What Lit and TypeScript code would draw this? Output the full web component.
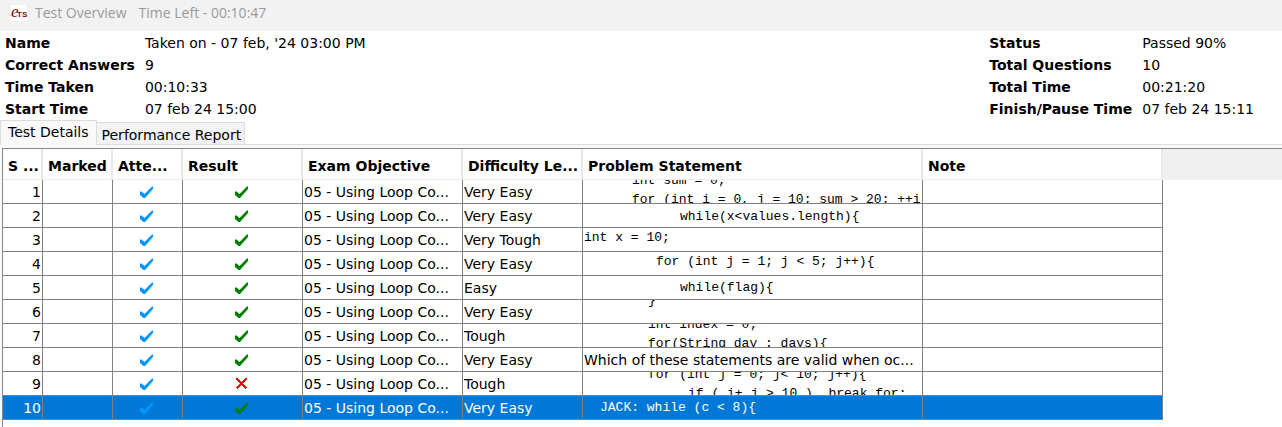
import { LitElement, html, css, svg, nothing } from "lit";
import { customElement, state } from "lit/decorators.js";
import { classMap } from "lit/directives/class-map.js";
import { styleMap } from "lit/directives/style-map.js";

interface CodeLine {
  indent: number;
  text: string;
}

interface Row {
  passed: boolean;
  level: string;
  shift?: number;
  code?: CodeLine[];
  prose?: string;
}

const CHAR = 8;

const ROWS: Row[] = [
  { passed: true, level: "Very Easy", shift: -9, code: [{ indent: 6, text: "int sum = 0;" }, { indent: 6, text: "for (int i = 0, j = 10; sum > 20; ++i" }] },
  { passed: true, level: "Very Easy", shift: 3, code: [{ indent: 12, text: "while(x<values.length){" }] },
  { passed: true, level: "Very Tough", shift: 0, code: [{ indent: 0, text: "int x = 10;" }] },
  { passed: true, level: "Very Easy", shift: 0, code: [{ indent: 9, text: "for (int j = 1; j < 5; j++){" }] },
  { passed: true, level: "Easy", shift: 2, code: [{ indent: 12, text: "while(flag){" }] },
  { passed: true, level: "Very Easy", shift: -9, code: [{ indent: 8, text: "}" }] },
  { passed: true, level: "Tough", shift: -9, code: [{ indent: 8, text: "int index = 0;" }, { indent: 8, text: "for(String day : days){" }] },
  { passed: true, level: "Very Easy", prose: "Which of these statements are valid when oc..." },
  { passed: false, level: "Tough", shift: -7, code: [{ indent: 8, text: "for (int j = 0; j< 10; j++){" }, { indent: 13, text: "if ( i+ j > 10 )  break for;" }] },
  { passed: true, level: "Very Easy", shift: 2, code: [{ indent: 2, text: "JACK: while (c < 8){" }] },
];

const HEADERS = ["S ...", "Marked", "Atte...", "Result", "Exam Objective", "Difficulty Le...", "Problem Statement", "Note"];

const SUMMARY_LEFT = [
  ["Name", "Taken on - 07 feb, '24 03:00 PM"],
  ["Correct Answers", "9"],
  ["Time Taken", "00:10:33"],
  ["Start Time", "07 feb 24 15:00"],
];

const SUMMARY_RIGHT = [
  ["Status", "Passed 90%"],
  ["Total Questions", "10"],
  ["Total Time", "00:21:20"],
  ["Finish/Pause Time", "07 feb 24 15:11"],
];

@customElement("result-mark")
class ResultMark extends LitElement {
  static properties = { kind: { type: String } };
  declare kind: string;

  static styles = css`
    :host { display: block; }
    svg { display: block; margin: 0 auto; }
    .attempted { fill: #0096ff; }
    .right { fill: #008000; }
    .wrong { stroke: #ff0000; stroke-width: 2; fill: none; shape-rendering: crispEdges; }
  `;

  render() {
    const shape =
      this.kind === "wrong"
        ? svg`<path class="wrong" d="M1.5 .5 11.5 10.5M11.5 .5 1.5 10.5" />`
        : svg`<path class=${this.kind} d="M0 5.5H1.5L4.5 8 12 .5H13V3L5 12H3.5L0 9Z" />`;
    return html`<svg width="13" height="12" viewBox="0 0 13 12" aria-hidden="true">${shape}</svg>`;
  }
}

@customElement("app-root")
export class AppRoot extends LitElement {
  @state() private tab = 0;
  @state() private selected = 9;

  static styles = css`
    :host {
      display: flex;
      flex-direction: column;
      min-height: 100vh;
      background: #fff;
      color: #000;
      font: 14px/22px "DejaVu Sans", Verdana, sans-serif;
    }
    .titlebar {
      display: flex;
      align-items: center;
      gap: 8px;
      height: 31px;
      padding: 0 11px 5px;
      box-sizing: border-box;
      background: #f2f2f2;
      color: #999;
      font-family: "Open Sans", sans-serif;
      white-space: pre;
    }
    .logo { display: block; background: #fff; overflow: visible; }
    .logo text { fill: #7a0c0c; }
    .script { font: italic 17px "Liberation Serif", serif; }
    .caps { font: bold 8px "Liberation Sans", sans-serif; }
    .timer { margin-left: 4px; }
    .summary {
      display: flex;
      justify-content: space-between;
      padding: 1px 28px 0 5px;
    }
    dl { display: grid; column-gap: 10px; margin: 0; grid-template-columns: auto auto; white-space: nowrap; }
    dt { font-weight: bold; }
    dd { margin: 0; }
    .tabs { display: flex; align-items: flex-end; height: 25px; box-sizing: border-box; border-bottom: 1px solid #dcdcdc; }
    .tab {
      font: inherit;
      color: inherit;
      height: 22px;
      margin: 0;
      padding: 3px 3px 0 5px;
      border: 1px solid #dcdcdc;
      border-width: 1px 1px 0 0;
      background: #f2f2f2;
      line-height: 19px;
      white-space: nowrap;
    }
    .tab.active {
      height: 25px;
      margin-bottom: -1px;
      padding: 0 7px 1px 7px;
      border-left-width: 1px;
      background: #f9f9f9;
    }
    .pane { flex: 1; display: flex; padding: 3px 0 0 2px; background: #f9f9f9; }
    .grid { flex: 1; min-width: 0; border: solid #828790; border-width: 1px 0 0 1px; background: #fff; }
    table { width: 100%; table-layout: fixed; border-collapse: separate; border-spacing: 0; }
    .c40 { width: 40px; }
    .c70 { width: 70px; }
    .c120 { width: 120px; }
    .c160 { width: 160px; }
    .c340 { width: 340px; }
    .c240 { width: 240px; }
    th {
      height: 31px;
      box-sizing: border-box;
      padding: 4px 0 0 5px;
      border-right: 2px solid #e8e8e8;
      border-bottom: 1px solid #ebebeb;
      text-align: left;
      font-weight: bold;
      white-space: nowrap;
      overflow: hidden;
    }
    td {
      height: 24px;
      box-sizing: border-box;
      padding: 0 0 0 1px;
      border: solid #808080;
      border-width: 0 1px 1px 0;
      line-height: 21px;
      white-space: nowrap;
      overflow: hidden;
    }
    .text { padding-top: 2px; }
    .mark { padding-right: 4px; }
    td.filler { border: 0; }
    thead .filler { background: #f0f0f0; }
    .num { text-align: right; padding-right: 1px; }
    tr.selected td:not(.filler) { background: #0078d7; color: #fff; }
    .clip { height: 23px; overflow: hidden; }
    .code { font: 13px/19px "Liberation Mono", monospace; white-space: pre; }
  `;

  private summary(items: string[][]) {
    return html`<dl>${items.map(([k, v]) => html`<dt>${k}</dt><dd>${v}</dd>`)}</dl>`;
  }

  private problem(row: Row) {
    if (row.prose) return html`<td class="text">${row.prose}</td>`;
    return html`<td><div class="clip">
      <div class="code" style=${styleMap({ marginTop: `${row.shift}px` })}>${row.code!.map(
        (l) => html`<div style=${styleMap({ paddingLeft: `${l.indent * CHAR}px` })}>${l.text}</div>`
      )}</div>
    </div></td>`;
  }

  render() {
    return html`
      <header class="titlebar">
        <svg class="logo" width="16" height="16" viewBox="0 0 16 16" aria-hidden="true">
          <text class="script" x="0" y="12">e</text>
          <text class="caps" x="6" y="12">TS</text>
        </svg>
        <span>Test Overview</span><span class="timer">Time Left - 00:10:47</span>
      </header>
      <section class="summary">${this.summary(SUMMARY_LEFT)}${this.summary(SUMMARY_RIGHT)}</section>
      <div class="tabs" role="tablist">
        ${["Test Details", "Performance Report"].map(
          (label, i) => html`<button
            role="tab"
            aria-selected=${this.tab === i}
            class=${classMap({ tab: true, active: this.tab === i })}
            @click=${() => (this.tab = i)}
          >${label}</button>`
        )}
      </div>
      <div class="pane"><div class="grid">
        ${this.tab === 0
          ? html`<table>
              <colgroup>
                <col class="c40" /><col class="c70" /><col class="c70" /><col class="c120" />
                <col class="c160" /><col class="c120" /><col class="c340" /><col class="c240" /><col />
              </colgroup>
              <thead><tr>${HEADERS.map((h) => html`<th scope="col">${h}</th>`)}<td class="filler"></td></tr></thead>
              <tbody>
                ${ROWS.map(
                  (row, i) => html`<tr class=${classMap({ selected: this.selected === i })} @click=${() => (this.selected = i)}>
                    <td class="text num">${i + 1}</td>
                    <td></td>
                    <td class="mark"><result-mark kind="attempted"></result-mark></td>
                    <td class="mark"><result-mark kind=${row.passed ? "right" : "wrong"}></result-mark></td>
                    <td class="text">05 - Using Loop Co...</td>
                    <td class="text">${row.level}</td>
                    ${this.problem(row)}
                    <td></td>
                    <td class="filler"></td>
                  </tr>`
                )}
              </tbody>
            </table>`
          : nothing}
      </div></div>
    `;
  }
}
